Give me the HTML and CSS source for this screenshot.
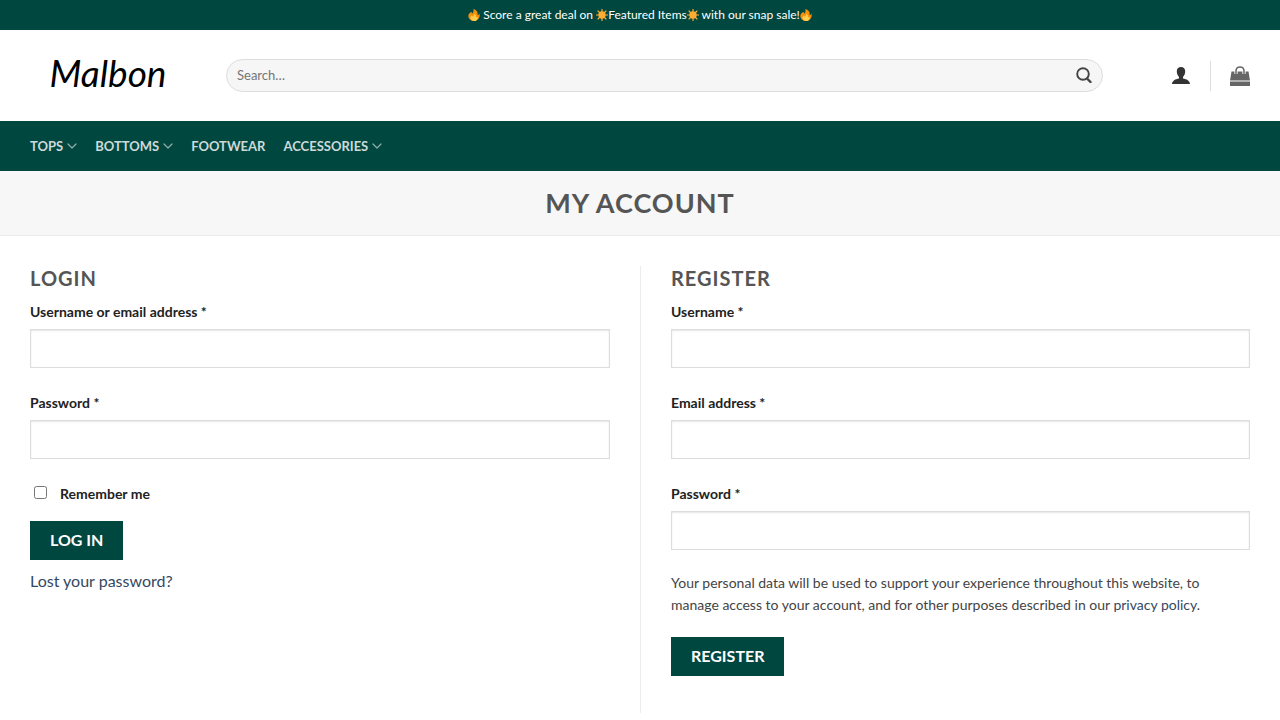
FILE: index.html
```html
<!DOCTYPE html>
<html lang="en">
<head>
<meta charset="utf-8">
<meta name="viewport" content="width=device-width, initial-scale=1">
<title>My Account - Malbon</title>
<link rel="stylesheet" href="styles.css">
</head>
<body>
<svg class="sprite" aria-hidden="true">
  <symbol id="fire" viewBox="0 0 36 36">
    <path fill="#f4900c" d="M35 19a17 17 0 0 0-1-5.500c-1.200 2.800-3 4.600-5.500 5.500C31 11 26.500 3.500 16 0c1.500 7 .5 10-4 14-1-2-1-3.500-.5-6C5 11 1 15 1 20.500 1 29.500 8.500 36 18 36s17-7.500 17-17z"/>
    <path fill="#ffcc4d" d="M28.400 23.700c-1.500.8-3 1-4.400.3 1-4-1-8-5-10 0 4-1.500 6-5 9-1.500-1-2-2-1.500-4C9 21.500 7.500 24 7.500 27c0 5.500 4.500 9 10.500 9s11-3.500 11-8.500c0-1.500-.2-2.700-.6-3.800z"/>
  </symbol>
  <symbol id="sun" viewBox="0 0 36 36">
    <path d="M18 1v34M1 18h34M6 6l24 24M30 6L6 30" stroke="#ffac33" stroke-width="3.500" stroke-linecap="round"/>
    <circle cx="18" cy="18" r="11" fill="#ffac33"/>
  </symbol>
  <symbol id="chevron" viewBox="0 0 10 10">
    <path d="M1 3l4 4 4-4" fill="none" stroke="currentColor" stroke-width="1.200" stroke-linecap="round" stroke-linejoin="round"/>
  </symbol>
</svg>

<div class="promo">
  <svg class="emoji"><use href="#fire"/></svg> Score a great deal on <svg class="emoji"><use href="#sun"/></svg>Featured Items<svg class="emoji"><use href="#sun"/></svg> with our snap sale!<svg class="emoji"><use href="#fire"/></svg>
</div>

<header class="masthead">
  <a class="logo" href="#" aria-label="Malbon">
    <svg viewBox="0 0 166 60"><text class="logo-word" x="78" y="42" text-anchor="middle">Malbon</text></svg>
  </a>
  <form class="search" role="search">
    <input class="search-input" type="search" placeholder="Search…" aria-label="Search">
    <button class="search-button" type="button" aria-label="Submit search">
      <svg viewBox="0 0 16 16"><circle cx="7" cy="7" r="5.800" fill="none" stroke="currentColor" stroke-width="1.900"/><path d="M11 11.500l3.500 3.500" stroke="currentColor" stroke-width="2.400" stroke-linecap="round"/></svg>
    </button>
  </form>
  <nav class="tools" aria-label="Account and cart">
    <a class="tool tool-user" href="#" aria-label="My account">
      <svg viewBox="0 0 20 20"><path fill="currentColor" d="M10 1c2.700 0 4.200 1.600 4.200 4.300 0 2.500-.9 4.500-2.200 5.600v1.600c3.700.7 6.700 2 7 5.500H1c.3-3.500 3.300-4.800 7-5.500v-1.600C6.700 9.800 5.800 7.800 5.800 5.300 5.800 2.600 7.300 1 10 1z"/></svg>
    </a>
    <a class="tool tool-cart" href="#" aria-label="Cart">
      <svg viewBox="0 0 20 20"><path fill="currentColor" d="M1.500 5.500h17L20 14.500H0zM0 15.500h20V20H0z"/><path d="M6 8V5c0-5.500 8-5.500 8 0v3" fill="none" stroke="#fff" stroke-width="3.200"/><path d="M6 8.500V5c0-5.500 8-5.500 8 0v3.500" fill="none" stroke="currentColor" stroke-width="1.500"/></svg>
    </a>
  </nav>
</header>

<nav class="menu" aria-label="Main">
  <a href="#">Tops <svg class="chevron"><use href="#chevron"/></svg></a>
  <a href="#">Bottoms <svg class="chevron"><use href="#chevron"/></svg></a>
  <a href="#">Footwear</a>
  <a href="#">Accessories <svg class="chevron"><use href="#chevron"/></svg></a>
</nav>

<div class="page-title"><h1>My Account</h1></div>

<main class="account">
  <section class="column">
    <h2>Login</h2>
    <form>
      <label class="label" for="login-name">Username or email address *</label>
      <input class="field" id="login-name" type="text">
      <label class="label" for="login-pass">Password *</label>
      <input class="field" id="login-pass" type="password">
      <label class="remember"><input type="checkbox"><span>Remember me</span></label>
      <button class="button" type="button">Log in</button>
      <p class="lost"><a href="#">Lost your password?</a></p>
    </form>
  </section>
  <section class="column">
    <h2>Register</h2>
    <form>
      <label class="label" for="reg-name">Username *</label>
      <input class="field" id="reg-name" type="text">
      <label class="label" for="reg-email">Email address *</label>
      <input class="field" id="reg-email" type="email">
      <label class="label" for="reg-pass">Password *</label>
      <input class="field field-last" id="reg-pass" type="password">
      <p class="privacy">Your personal data will be used to support your experience throughout this website, to manage access to your account, and for other purposes described in our <a href="#">privacy policy</a>.</p>
      <button class="button" type="button">Register</button>
    </form>
  </section>
</main>
</body>
</html>
```
FILE: styles.css
```css
* { box-sizing: border-box; }
body {
  margin: 0;
  background: #fff;
  color: #444;
  font-family: Lato, sans-serif;
  font-size: 16px;
  line-height: 26px;
}
a { color: #334862; text-decoration: none; }
h1, h2, p { margin: 0; }
.sprite { display: none; }

.promo {
  background: #004740;
  color: #fff;
  font-size: 12px;
  line-height: 30px;
  text-align: center;
}
.emoji { width: 12px; height: 12px; vertical-align: -2px; }

.masthead {
  display: flex;
  align-items: center;
  padding: 15px 30px 16px;
}
.logo { flex: none; width: 166px; height: 60px; }
.logo svg { display: block; width: 100%; height: 100%; }
.logo-word { font: italic 37px Lato, sans-serif; fill: #000; }
.search {
  flex: 1;
  display: flex;
  align-items: center;
  height: 33px;
  margin: 0 68px 0 30px;
  padding: 0 10px;
  border: 1px solid #ddd;
  border-radius: 99px;
  background: #f6f6f6;
}
.search-input {
  flex: 1;
  min-width: 0;
  padding: 0;
  border: 0;
  outline: 0;
  background: transparent;
  font: 13px Lato, sans-serif;
  color: #333;
}
.search-input::placeholder { color: #757575; }
.search-button {
  width: 16px;
  height: 18px;
  padding: 0;
  border: 0;
  background: none;
  color: #444;
}
.search-button svg { display: block; width: 16px; height: 16px; }
.tools { display: flex; align-items: center; padding-top: 2px; }
.tool { display: flex; align-items: center; height: 30px; }
.tool svg { width: 20px; height: 20px; }
.tool-user { padding-right: 19px; border-right: 1px solid #ddd; color: #333; }
.tool-cart { padding-left: 19px; color: #666; }

.menu {
  display: flex;
  align-items: center;
  gap: 18px;
  min-height: 50px;
  padding: 0 30px;
  background: #004740;
}
.menu a {
  display: flex;
  align-items: center;
  gap: 4px;
  color: #ccdad9;
  font-size: 13px;
  font-weight: 700;
  text-transform: uppercase;
}
.chevron { width: 10px; height: 10px; opacity: .7; }

.page-title {
  padding: 14px 30px 15px;
  border-bottom: 1px solid #ebebeb;
  background: #f7f7f7;
  text-align: center;
}
h1, h2 { color: #555; font-weight: 700; text-transform: uppercase; letter-spacing: 1px; }
h1 { font-size: 27px; line-height: 35px; }
h2 { margin-bottom: 12px; font-size: 20px; line-height: 24px; }

.account {
  display: grid;
  grid-template-columns: 1fr 1fr;
  padding: 30px 0;
}
.column { padding: 0 30px 37px; }
.column + .column { border-left: 1px solid #ececec; }
.label {
  display: block;
  margin-bottom: 7px;
  color: #222;
  font-size: 14px;
  font-weight: 700;
  line-height: 20px;
}
.field {
  display: block;
  width: 100%;
  height: 39px;
  margin: 0 0 25px;
  padding: 0 12px;
  border: 1px solid #ddd;
  border-radius: 0;
  background: #fff;
  box-shadow: inset 0 1px 2px rgba(0, 0, 0, .1);
  color: #333;
  font: 16px Lato, sans-serif;
}
.field-last { margin-bottom: 22px; }
.remember {
  display: flex;
  align-items: center;
  gap: 13px;
  margin-bottom: 17px;
  color: #222;
  font-size: 14px;
  font-weight: 700;
  line-height: 20px;
}
.remember input { width: 13px; height: 13px; margin: 0 0 4px 4px; }
.button {
  display: block;
  height: 39px;
  padding: 0 20px 2px;
  border: 0;
  background: #004740;
  color: #fff;
  font: 700 16px Lato, sans-serif;
  text-transform: uppercase;
}
.lost { margin-top: 8px; }
.privacy { margin-bottom: 21px; font-size: 14px; line-height: 22px; }
```
